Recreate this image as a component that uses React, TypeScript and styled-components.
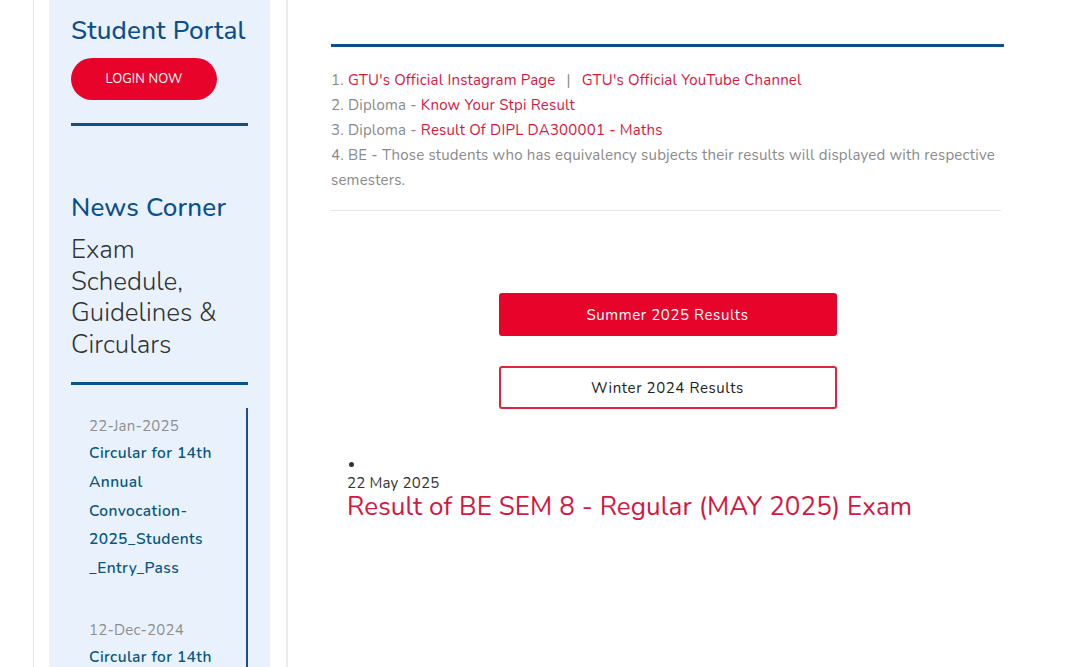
import React from "react";
import styled, { createGlobalStyle } from "styled-components";

const Global = createGlobalStyle`
  html, body { margin: 0; padding: 0; background: #fff; }
  body { font-family: "Nunito", "Lato", "Open Sans", sans-serif; overflow: hidden; }
  * { box-sizing: border-box; }
`;

const Page = styled.div`
  display: flex;
  height: 667px;
  padding-left: 33px;
  overflow: hidden;
`;

const LeftColumn = styled.div`
  width: 255px;
  flex: none;
  border-left: 1px solid #e4e4e4;
  border-right: 2px solid #ececec;
  padding: 0 16px 0 15px;
`;

const Sidebar = styled.aside`
  background: #e9f2fc;
  height: 100%;
  padding: 14px 22px 0 22px;
`;

const Heading = styled.h2`
  margin: 0;
  font-size: 26px;
  font-weight: 500;
  line-height: 34px;
  letter-spacing: 0.2px;
  color: #0d4f8b;
  white-space: nowrap;
`;

const LoginButton = styled.button`
  margin-top: 10px;
  width: 146px;
  height: 42px;
  border: none;
  border-radius: 21px;
  background: #e8032b;
  color: #fff;
  font-family: inherit;
  font-size: 13px;
  letter-spacing: 0.1px;
  text-transform: uppercase;
`;

const Rule = styled.div<{ $top: number; $bottom: number }>`
  height: 3px;
  background: #0d4f8b;
  margin-top: ${(p) => p.$top}px;
  margin-bottom: ${(p) => p.$bottom}px;
`;

const SubHeading = styled.p`
  margin: 9px 0 0;
  font-size: 26px;
  font-weight: 300;
  line-height: 31.5px;
  color: #333;
`;

const NewsList = styled.div`
  border-right: 2px solid #1b4f8c;
  padding: 6px 0 0 18px;
  height: 400px;
`;

const NewsItem = styled.div`
  margin-bottom: 35px;
`;

const NewsDate = styled.div`
  font-size: 15px;
  line-height: 24px;
  letter-spacing: 0.2px;
  color: #8e8e8e;
`;

const NewsLink = styled.a`
  display: block;
  margin-top: 1px;
  font-size: 15.5px;
  font-weight: 600;
  line-height: 28.8px;
  letter-spacing: 0.4px;
  color: #0b5782;
  text-decoration: none;
  word-break: break-word;
`;

const Main = styled.main`
  flex: 1;
  padding: 44px 76px 0 43px;
  letter-spacing: 0.2px;
`;

const TopBar = styled.div`
  height: 3px;
  background: #0d4f8b;
  width: 673px;
`;

const Notices = styled.ol`
  list-style: none;
  margin: 0;
  padding: 21px 0 17px;
  width: 670px;
  font-size: 15px;
  line-height: 25px;
  color: #8a8a8a;
  border-bottom: 1px solid #e6e6e6;
`;

const NoticeLink = styled.a`
  color: #d4173f;
  text-decoration: none;
`;

const Pipe = styled.span`
  margin: 0 11px;
`;

const ButtonStack = styled.div`
  display: flex;
  flex-direction: column;
  align-items: center;
  gap: 30px;
  width: 673px;
  padding-top: 82px;
`;

const ResultButton = styled.button<{ $primary?: boolean }>`
  width: 338px;
  height: 43px;
  border-radius: 3px;
  font-family: inherit;
  font-size: 15px;
  letter-spacing: 0.6px;
  background: ${(p) => (p.$primary ? "#e8032b" : "#fff")};
  color: ${(p) => (p.$primary ? "#fff" : "#222")};
  border: 2px solid ${(p) => (p.$primary ? "#e8032b" : "#e0243f")};
`;

const Latest = styled.ul`
  margin: 48px 0 0;
  padding: 0 0 0 16px;
  list-style: none;
`;

const LatestItem = styled.li`
  position: relative;
  padding-top: 16px;
  &::before {
    content: "";
    position: absolute;
    left: 2px;
    top: 5px;
    width: 5px;
    height: 5px;
    border-radius: 50%;
    background: #333;
  }
`;

const LatestDate = styled.div`
  font-size: 15px;
  line-height: 20px;
  color: #333;
`;

const LatestTitle = styled.a`
  display: block;
  font-size: 26px;
  line-height: 28px;
  letter-spacing: 0.1px;
  color: #d4173f;
  text-decoration: none;
`;

type News = { date: string; lines: string[] };

const news: News[] = [
  {
    date: "22-Jan-2025",
    lines: ["Circular for 14th", "Annual", "Convocation-", "2025_Students", "_Entry_Pass"],
  },
  { date: "12-Dec-2024", lines: ["Circular for 14th", "Annual", "Convocation"] },
];

export default function App() {
  return (
    <>
      <Global />
      <Page>
        <LeftColumn>
          <Sidebar>
            <Heading>Student Portal</Heading>
            <LoginButton>Login Now</LoginButton>
            <Rule $top={23} $bottom={65} />
            <Heading>News Corner</Heading>
            <SubHeading>
              Exam
              <br />
              Schedule,
              <br />
              Guidelines &amp;
              <br />
              Circulars
            </SubHeading>
            <Rule $top={22} $bottom={23} />
            <NewsList>
              {news.map((n) => (
                <NewsItem key={n.date}>
                  <NewsDate>{n.date}</NewsDate>
                  <NewsLink href="#">
                    {n.lines.map((l, i) => (
                      <React.Fragment key={i}>
                        {i > 0 && <br />}
                        {l}
                      </React.Fragment>
                    ))}
                  </NewsLink>
                </NewsItem>
              ))}
            </NewsList>
          </Sidebar>
        </LeftColumn>
        <Main>
          <TopBar />
          <Notices>
            <li>
              1. <NoticeLink href="#">GTU's Official Instagram Page</NoticeLink>
              <Pipe>|</Pipe>
              <NoticeLink href="#">GTU's Official YouTube Channel</NoticeLink>
            </li>
            <li>
              2. Diploma - <NoticeLink href="#">Know Your Stpi Result</NoticeLink>
            </li>
            <li>
              3. Diploma - <NoticeLink href="#">Result Of DIPL DA300001 - Maths</NoticeLink>
            </li>
            <li>
              4. BE - Those students who has equivalency subjects their results will displayed with respective
              semesters.
            </li>
          </Notices>
          <ButtonStack>
            <ResultButton $primary>Summer 2025 Results</ResultButton>
            <ResultButton>Winter 2024 Results</ResultButton>
          </ButtonStack>
          <Latest>
            <LatestItem>
              <LatestDate>22 May 2025</LatestDate>
              <LatestTitle href="#">Result of BE SEM 8 - Regular (MAY 2025) Exam</LatestTitle>
            </LatestItem>
          </Latest>
        </Main>
      </Page>
    </>
  );
}
